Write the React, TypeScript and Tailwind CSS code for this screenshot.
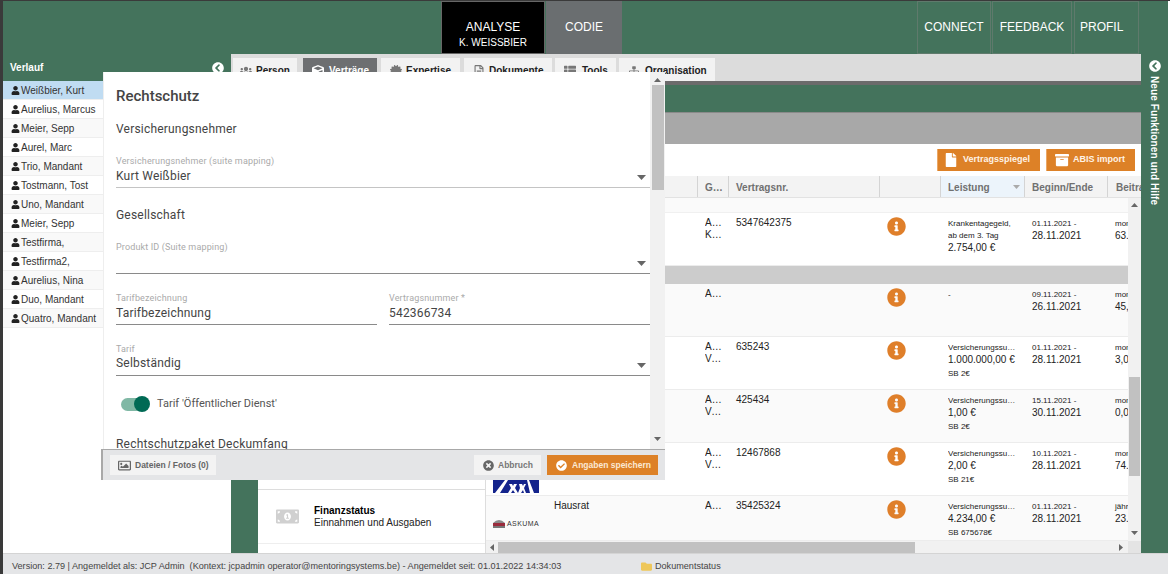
import { FaUser, FaUsers, FaCube, FaCertificate, FaRegFileAlt, FaThList, FaSitemap, FaChevronCircleLeft, FaFile, FaArchive, FaInfoCircle, FaRegImage, FaTimesCircle, FaCheckCircle, FaMoneyBillAlt, FaFolder } from 'react-icons/fa';

var SANS = "font-['Liberation_Sans',Arial,sans-serif]";
var COLS = "grid grid-cols-[212px_31px_151px_61px_84px_83px_60px]";

var HISTORY = ["Weißbier, Kurt", "Aurelius, Marcus", "Meier, Sepp", "Aurel, Marc", "Trio, Mandant", "Tostmann, Tost", "Uno, Mandant", "Meier, Sepp", "Testfirma,", "Testfirma2,", "Aurelius, Nina", "Duo, Mandant", "Quatro, Mandant"];

var TABS = [
  { label: "Person", icon: FaUsers, box: "ml-0 w-[64px] gap-[4px] pl-[7px]" },
  { label: "Verträge", icon: FaCube, box: "ml-[6px] w-[74px] gap-[5px] pl-[9px]", active: true },
  { label: "Expertise", icon: FaCertificate, box: "ml-[4px] w-[79px] gap-[4px] pl-[9px]" },
  { label: "Dokumente", icon: FaRegFileAlt, box: "ml-[4px] w-[88px] gap-[4px] pl-[9px]" },
  { label: "Tools", icon: FaThList, box: "ml-[3px] w-[61px] gap-[6px] pl-[9px]" },
  { label: "Organisation", icon: FaSitemap, box: "ml-[3px] w-[96px] gap-[5px] pl-[9px]" },
];

interface Row {
  name?: string;
  groups: string[];
  nr: string;
  small: string[];
  amount?: string;
  sb?: string;
  start: string;
  end: string;
  period: string;
  fee: string;
  logo?: "blue" | "askuma";
  alt?: boolean;
  height: string;
}

var ROWS: Row[] = [
  { groups: ["Allgemein", "Kranken"], nr: "5347642375", small: ["Krankentagegeld,", "ab dem 3. Tag"], amount: "2.754,00 €", start: "01.11.2021 -", end: "28.11.2021", period: "monatlich", fee: "63.000,00 €", height: "h-[53px]" },
  { groups: ["Allgemein"], nr: "", small: ["-"], start: "09.11.2021 -", end: "26.11.2021", period: "monatlich", fee: "45,00 €", alt: true, height: "h-[53px]" },
  { groups: ["Allgemein", "Versicherung"], nr: "635243", small: ["Versicherungssumme"], amount: "1.000.000,00 €", sb: "SB 2€", start: "01.11.2021 -", end: "28.11.2021", period: "monatlich", fee: "3,00 €", height: "h-[53px]" },
  { groups: ["Allgemein", "Versicherung"], nr: "425434", small: ["Versicherungssumme"], amount: "1,00 €", sb: "SB 2€", start: "15.11.2021 -", end: "30.11.2021", period: "monatlich", fee: "0,00 €", alt: true, height: "h-[53px]" },
  { groups: ["Allgemein", "Versicherung"], nr: "12467868", small: ["Versicherungssumme"], amount: "2,00 €", sb: "SB 21€", start: "10.11.2021 -", end: "28.11.2021", period: "monatlich", fee: "74.000,00 €", logo: "blue", height: "h-[53px]" },
  { name: "Hausrat", groups: ["Allgemein"], nr: "35425324", small: ["Versicherungssumme"], amount: "4.234,00 €", sb: "SB 675678€", start: "01.11.2021 -", end: "28.11.2021", period: "jährlich", fee: "23.000,00 €", logo: "askuma", alt: true, height: "h-[45px]" },
];

function Caret({ className }: { className: string }) {
  return (
    <svg width="9" height="5" viewBox="0 0 9 5" className={"mr-[4px] shrink-0 " + className}>
      <path d="M0 0h9L4.500 5z" fill="#666" />
    </svg>
  );
}

function Arrow({ dir }: { dir: "up" | "down" | "left" | "right" }) {
  var d = dir === "up" ? "M0 5h7L3.500 1z" : dir === "down" ? "M0 1h7L3.500 5z" : dir === "left" ? "M5 0v7L1 3.500z" : "M1 0v7L5 3.500z";
  return (
    <svg width="7" height="7" viewBox="0 0 7 7" className="shrink-0">
      <path d={d} fill="#666" />
    </svg>
  );
}

function Logo({ kind }: { kind?: "blue" | "askuma" }) {
  if (kind === "blue") {
    return (
      <svg width="46" height="28" viewBox="0 0 46 28" className="absolute left-[7px] bottom-[2px]">
        <rect width="46" height="28" fill="#14248c" />
        <path d="M2 28L12 15h3L7 28zM15 28l3-5-2-4h3l1 2 1-2h3l-2 4 3 5h-3l-2-3-2 3zM25 28l2-5-1-4h3l1 2 1-2h2l-2 4 2 5h-2l-1-3-2 3zM34 15h2l5 13h-4z" fill="#fff" />
      </svg>
    );
  }
  if (kind === "askuma") {
    return (
      <div className="absolute left-[7px] bottom-[12px] flex items-center gap-[2px]">
        <svg width="12" height="9" viewBox="0 0 12 9">
          <path d="M0 4Q6-2 12 4z" fill="#8a8a8a" />
          <rect y="4" width="12" height="3" fill="#9a2b3c" />
          <rect y="7" width="12" height="2" fill="#777" />
        </svg>
        <span className="text-[7px] leading-none text-[#333] tracking-[0.4px]">ASKUMA</span>
      </div>
    );
  }
  return null;
}

function HeaderCell({ children, className }: { children?: React.ReactNode; className?: string }) {
  return (
    <div className={"flex h-[21px] items-center border-r border-[#d4d4d4] pl-[7px] pt-[1px] text-[10px] font-bold text-[#707070] whitespace-nowrap " + (className || "")}>
      {children}
    </div>
  );
}

function TableRow({ row }: { row: Row }) {
  return (
    <div className={COLS + " relative border-b border-[#ececec] text-[10px] leading-[12px] text-[#222] " + row.height + " " + (row.alt ? "bg-[#fafafa]" : "bg-white")}>
      <div className="relative pl-[68px] pt-[4px]">
        {row.name}
        <Logo kind={row.logo} />
      </div>
      <div className="pl-[7px] pt-[4px]">
        {row.groups.map(function(g) {
          return <div key={g} className="w-[17px] truncate">{g}</div>;
        })}
      </div>
      <div className="pl-[7px] pt-[4px]">{row.nr}</div>
      <div className="pl-[7px] pt-[4px] text-[#df7f2a]">
        <FaInfoCircle className="text-[19px]" />
      </div>
      <div className="pl-[7px] pr-[4px] pt-[5px]">
        {row.small.map(function(s) {
          return <div key={s} className="truncate text-[8px] leading-[12px]">{s}</div>;
        })}
        {row.amount ? <div className="whitespace-nowrap leading-[12px]">{row.amount}</div> : null}
        {row.sb ? <div className="mt-[2px] text-[8px] leading-[11px]">{row.sb}</div> : null}
      </div>
      <div className="pl-[7px] pt-[5px]">
        <div className="text-[8px] leading-[12px]">{row.start}</div>
        <div className="leading-[12px]">{row.end}</div>
      </div>
      <div className="pl-[7px] pt-[5px] whitespace-nowrap">
        <div className="text-[8px] leading-[12px]">{row.period}</div>
        <div className="leading-[12px]">{row.fee}</div>
      </div>
    </div>
  );
}

function Modal() {
  return (
    <div className="absolute left-[98px] top-[71px] flex w-[564px] flex-col font-['Roboto',sans-serif]">
      <div className="ml-[2px] flex h-[377px] border-l border-[#eeeeee] bg-white">
        <div className="flex-1 overflow-hidden pl-[12px] text-[#444]">
          <div className="pt-[14px] text-[15px] font-medium leading-[20px] text-[#444]">Rechtschutz</div>
          <div className="mt-[14px] text-[12px] leading-[18px] tracking-[0.2px]">Versicherungsnehmer</div>
          <div className="mt-[17px] text-[9px] leading-[12px] tracking-[0.15px] text-[#aaa]">Versicherungsnehmer (suite mapping)</div>
          <div className="flex h-[21px] items-end justify-between border-b border-[#c4c4c4] pb-[2px] text-[12px] leading-[18px] tracking-[0.2px]">
            Kurt Weißbier
            <Caret className="mb-[5px]" />
          </div>
          <div className="mt-[18px] text-[12px] leading-[18px] tracking-[0.2px]">Gesellschaft</div>
          <div className="mt-[17px] text-[9px] leading-[12px] tracking-[0.15px] text-[#aaa]">Produkt ID (Suite mapping)</div>
          <div className="flex h-[21px] items-end justify-end border-b border-[#8a8a8a] pb-[2px]">
            <Caret className="mb-[5px]" />
          </div>
          <div className="mt-[18px] flex gap-[12px]">
            <div className="w-[261px]">
              <div className="text-[9px] leading-[12px] tracking-[0.15px] text-[#aaa]">Tarifbezeichnung</div>
              <div className="h-[21px] border-b border-[#8a8a8a] text-[12px] leading-[18px] tracking-[0.2px]">Tarifbezeichnung</div>
            </div>
            <div className="w-[261px]">
              <div className="text-[9px] leading-[12px] tracking-[0.15px] text-[#aaa]">Vertragsnummer *</div>
              <div className="h-[21px] border-b border-[#8a8a8a] text-[12px] leading-[18px] tracking-[0.2px]">542366734</div>
            </div>
          </div>
          <div className="mt-[18px] text-[9px] leading-[12px] tracking-[0.15px] text-[#aaa]">Tarif</div>
          <div className="flex h-[21px] items-end justify-between border-b border-[#8a8a8a] pb-[3px] text-[12px] leading-[18px] tracking-[0.2px]">
            Selbständig
            <Caret className="mb-[4px]" />
          </div>
          <div className="ml-[5px] mt-[18px] flex h-[20px] items-center gap-[7px]">
            <div className="relative h-[13px] w-[29px]">
              <div className="absolute left-0 top-0 h-[13px] w-[25px] rounded-full bg-[#80b8a5]" />
              <div className="absolute -top-[1.500px] right-0 h-[16px] w-[16px] rounded-full bg-[#006a55]" />
            </div>
            <span className="text-[11px] text-[#555]">Tarif 'Öffentlicher Dienst'</span>
          </div>
          <div className="mt-[21px] text-[12px] leading-[18px] tracking-[0.2px]">Rechtschutzpaket Deckumfang</div>
        </div>
        <div className="flex w-[15px] flex-col items-center bg-[#f1f1f1] pb-[6px] pt-[5px]">
          <Arrow dir="up" />
          <div className="mt-[1px] h-[105px] w-[12px] bg-[#c1c1c1]" />
          <div className="flex-1" />
          <Arrow dir="down" />
        </div>
      </div>
      <div className={"flex h-[31px] items-center border-l-[2px] border-t border-[#a8a8a8] bg-[#e4e5e7] pl-[7px] pr-[7px] text-[8.5px] font-bold " + SANS}>
        <div className="flex h-[20px] w-[106px] items-center gap-[4px] bg-[#f3f3f3] pl-[8px] text-[#666]">
          <FaRegImage className="text-[13px]" />
          Dateien / Fotos (0)
        </div>
        <div className="ml-auto flex h-[20px] w-[67px] items-center gap-[4px] bg-[#f3f3f3] pl-[9px] text-[#777]">
          <FaTimesCircle className="text-[11px] text-[#666]" />
          Abbruch
        </div>
        <div className="ml-[6px] flex h-[20px] w-[111px] items-center gap-[5px] bg-[#dd8127] pl-[9px] text-[#fbe9d5]">
          <FaCheckCircle className="text-[11px] text-white" />
          Angaben speichern
        </div>
      </div>
    </div>
  );
}

export default function App() {
  return (
    <div className={"relative flex h-[574px] w-[1170px] flex-col overflow-hidden border-l-[3px] border-t border-[#3a3a3a] bg-white " + SANS}>
      {/* top navigation */}
      <div className="flex h-[53px] w-[1165px] shrink-0 bg-[#44735c] text-[12px] text-white">
        <div className="ml-[438px] flex h-full w-[104px] flex-col items-center justify-center border border-[#666] bg-black pt-[15px]">
          <div className="leading-[15px]">ANALYSE</div>
          <div className="text-[10px] leading-[15px]">K. WEISSBIER</div>
        </div>
        <div className="ml-[1px] flex h-full w-[76px] items-center justify-center bg-[#6a6e70] pb-[2px]">CODIE</div>
        <div className="ml-auto flex h-full w-[74px] items-center justify-center border border-[#5f7a6c] pb-[2px]">CONNECT</div>
        <div className="ml-[1px] flex h-full w-[80px] items-center justify-center border border-[#5f7a6c] pb-[2px]">FEEDBACK</div>
        <div className="ml-[2px] mr-[29px] flex h-full w-[65px] items-center border border-[#5f7a6c] pb-[2px] pl-[5px]">PROFIL</div>
      </div>

      <div className="flex min-h-0 flex-1">
        {/* history sidebar */}
        <div className="flex w-[228px] shrink-0 flex-col">
          <div className="flex h-[27px] shrink-0 items-center justify-between bg-[#44735c] pl-[7px] pr-[7px] text-[10px] font-bold text-white">
            Verlauf
            <FaChevronCircleLeft className="mt-[1px] text-[12px]" />
          </div>
          {HISTORY.map(function(name, i) {
            return (
              <div key={i} className={"flex h-[19px] shrink-0 items-center gap-[1px] border-b border-[#eeeeee] pl-[8px] text-[10px] text-[#333] " + (i === 0 ? "bg-[#c0dcf2]" : i % 2 === 1 ? "bg-white" : "bg-[#f9f9f9]")}>
                <FaUser className="text-[9px] text-[#222]" />
                {name}
              </div>
            );
          })}
        </div>

        {/* main area */}
        <div className="flex w-[910px] shrink-0 flex-col">
          <div className="flex h-[27px] shrink-0 items-end bg-[#dcdcdc] pl-[2px]">
            {TABS.map(function(tab) {
              var Icon = tab.icon;
              return (
                <div key={tab.label} className={"flex h-[23px] items-center pt-[2px] text-[10px] font-bold " + tab.box + " " + (tab.active ? "bg-[#6d6f71] text-white" : "bg-[#f2f2f2] text-[#222]")}>
                  <Icon className={"text-[12px] " + (tab.active ? "text-white" : "text-[#777]")} />
                  {tab.label}
                </div>
              );
            })}
          </div>
          <div className="h-[4px] shrink-0 bg-[#6b6b6b]" />
          <div className="h-[27px] shrink-0 bg-[#44735c]" />
          <div className="h-[32px] shrink-0 border-t border-[#8a8a8a] bg-[#a8a8a8]" />
          <div className="flex h-[32px] shrink-0 items-center justify-end gap-[6px] pr-[6px] text-[9px] font-bold text-[#fff3e6]">
            <div className="flex h-[22px] w-[103px] items-center gap-[5px] border-l border-[#eaa766] bg-[#dd8127] pl-[6px]">
              <FaFile className="text-[14px] text-white" />
              Vertragsspiegel
            </div>
            <div className="flex h-[22px] w-[89px] items-center gap-[4px] border-l border-[#eaa766] bg-[#dd8127] pl-[8px]">
              <FaArchive className="text-[14px] text-white" />
              ABIS import
            </div>
          </div>

          <div className="flex min-h-0 flex-1">
            <div className="w-[27px] shrink-0 bg-[#44735c]" />
            <div className="flex w-[228px] shrink-0 flex-col justify-end border-r border-[#dddddd] bg-white">
              <div className="flex h-[54px] items-center border-t border-[#dddddd] pl-[18px]">
                <FaMoneyBillAlt className="text-[23px] text-[#d0d0d0]" />
                <div className="ml-[15px] text-[10px] leading-[12px] text-[#222]">
                  <div className="font-bold text-black">Finanzstatus</div>
                  <div>Einnahmen und Ausgaben</div>
                </div>
              </div>
              <div className="h-[10px] border-t border-[#eeeeee]" />
            </div>

            <div className="flex w-[655px] shrink-0 flex-col">
              <div className={COLS + " h-[22px] shrink-0 overflow-hidden border-b border-[#e2e2e2] bg-[#f3f3f3]"}>
                <HeaderCell />
                <HeaderCell><span className="w-[18px] truncate">Gesellschaft</span></HeaderCell>
                <HeaderCell>Vertragsnr.</HeaderCell>
                <HeaderCell />
                <HeaderCell className="justify-between bg-[#ecf4fb] pr-[4px]">
                  Leistung
                  <svg width="7" height="4" viewBox="0 0 7 4"><path d="M0 0h7L3.500 4z" fill="#aaa" /></svg>
                </HeaderCell>
                <HeaderCell>Beginn/Ende</HeaderCell>
                <HeaderCell className="border-r-0 pl-[8px]">Beitrag</HeaderCell>
              </div>
              <div className="flex min-h-0 flex-1">
                <div className="w-[642px] shrink-0 overflow-hidden">
                  <div className="h-[15px] border-b border-[#f0f0f0] bg-[#fafafa]" />
                  <TableRow row={ROWS[0]} />
                  <div className="h-[18px] bg-[#cccccc]" />
                  {ROWS.slice(1).map(function(row) {
                    return <TableRow key={row.start + row.nr} row={row} />;
                  })}
                </div>
                <div className="flex w-[13px] shrink-0 flex-col items-center bg-[#f1f1f1] pb-[4px] pt-[4px]">
                  <Arrow dir="up" />
                  <div className="mt-[168px] h-[99px] w-[11px] bg-[#c1c1c1]" />
                  <div className="flex-1" />
                  <Arrow dir="down" />
                </div>
              </div>
              <div className="flex h-[12px] shrink-0 items-center bg-[#f1f1f1] pl-[3px]">
                <Arrow dir="left" />
                <div className="ml-[2px] h-[11px] w-[417px] bg-[#c1c1c1]" />
                <div className="flex-1" />
                <Arrow dir="right" />
                <div className="ml-[3px] h-[12px] w-[13px] bg-[#e4e4e4]" />
              </div>
            </div>
          </div>
        </div>

        {/* help rail */}
        <div className="flex w-[27px] shrink-0 flex-col items-center bg-[#44735c] pt-[6px] text-white">
          <FaChevronCircleLeft className="text-[12px]" />
          <div className="mt-[4px] text-[10px] font-bold tracking-[0.1px] [writing-mode:vertical-rl]">Neue Funktionen und Hilfe</div>
        </div>
      </div>

      {/* status bar */}
      <div className="flex h-[21px] w-[1165px] shrink-0 items-center border-t border-[#d4d4d4] bg-[#e4e5e7] pl-[9px] pt-[5px] text-[9.1px] text-[#444]">
        <span className="w-[629px] whitespace-pre">Version: 2.79 | Angemeldet als: JCP Admin  (Kontext: jcpadmin operator@mentoringsystems.be) - Angemeldet seit: 01.01.2022 14:34:03</span>
        <FaFolder className="text-[11px] text-[#eec75a]" />
        <span className="ml-[3px]">Dokumentstatus</span>
      </div>

      <Modal />
    </div>
  );
}
